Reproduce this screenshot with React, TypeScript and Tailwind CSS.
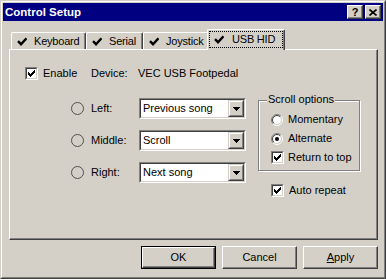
import React from "react";

// classic 7x7 check glyph
const CHECK_ROWS = [
  "......X",
  ".....XX",
  "X...XXX",
  "XX.XXX.",
  "XXXXX..",
  ".XXX...",
  "..X....",
];

function CheckGlyph() {
  return (
    <svg width="7" height="7" viewBox="0 0 7 7" shapeRendering="crispEdges">
      {CHECK_ROWS.map((row, y) =>
        row.split("").map((c, x) =>
          c === "X" ? <rect key={`${x}-${y}`} x={x} y={y} width="1" height="1" fill="#000" /> : null
        )
      )}
    </svg>
  );
}

function CheckBox({ checked }: { checked?: boolean }) {
  return (
    <span className="inline-block w-[13px] h-[13px] shrink-0 border border-t-[#808080] border-l-[#808080] border-r-white border-b-white">
      <span className="flex w-full h-full items-center justify-center bg-white border border-t-[#404040] border-l-[#404040] border-r-[#d4d0c8] border-b-[#d4d0c8]">
        {checked && <CheckGlyph />}
      </span>
    </span>
  );
}

function Radio3D({ checked }: { checked?: boolean }) {
  // 12x12 sunken radio
  const arc = (r: number) => {
    const d = r * Math.SQRT1_2;
    return {
      tl: `M${6 - d} ${6 + d} A${r} ${r} 0 0 1 ${6 + d} ${6 - d}`,
      br: `M${6 + d} ${6 - d} A${r} ${r} 0 0 1 ${6 - d} ${6 + d}`,
    };
  };
  const o = arc(5.5);
  const i = arc(4.5);
  return (
    <svg width="12" height="12" viewBox="0 0 12 12" className="shrink-0">
      <circle cx="6" cy="6" r="4.5" fill="#fff" />
      <path d={o.tl} stroke="#808080" fill="none" />
      <path d={o.br} stroke="#fff" fill="none" />
      <path d={i.tl} stroke="#404040" fill="none" />
      <path d={i.br} stroke="#d4d0c8" fill="none" />
      {checked && <circle cx="6" cy="6" r="2" fill="#000" />}
    </svg>
  );
}

function RingRadio() {
  return (
    <svg width="13" height="13" viewBox="0 0 13 13" className="shrink-0">
      <circle cx="6.5" cy="6.5" r="6" stroke="#505050" fill="none" />
    </svg>
  );
}

function DownArrow() {
  return (
    <svg width="7" height="4" viewBox="0 0 7 4" shapeRendering="crispEdges">
      <rect x="0" y="0" width="7" height="1" fill="#000" />
      <rect x="1" y="1" width="5" height="1" fill="#000" />
      <rect x="2" y="2" width="3" height="1" fill="#000" />
      <rect x="3" y="3" width="1" height="1" fill="#000" />
    </svg>
  );
}

function Combo({ value }: { value: string }) {
  return (
    <div className="w-[107px] h-[21px] shrink-0 border border-t-[#808080] border-l-[#808080] border-r-white border-b-white">
      <div className="flex h-full items-center bg-white border border-t-[#404040] border-l-[#404040] border-r-[#d4d0c8] border-b-[#d4d0c8]">
        <span className="flex-1 pl-[2px] whitespace-nowrap">{value}</span>
        <span className="w-[16px] h-[17px] border border-t-[#d4d0c8] border-l-[#d4d0c8] border-r-[#404040] border-b-[#404040]">
          <span className="flex h-full items-center justify-center bg-[#d4d0c8] border border-t-white border-l-white border-r-[#808080] border-b-[#808080]">
            <DownArrow />
          </span>
        </span>
      </div>
    </div>
  );
}

function CaptionBtn({ children, className = "" }: { children: React.ReactNode; className?: string }) {
  return (
    <span
      className={`w-[16px] h-[14px] border border-t-white border-l-white border-r-[#404040] border-b-[#404040] shadow-[inset_-1px_-1px_0_#808080] bg-[#d4d0c8] flex items-center justify-center text-black font-bold text-[11px] leading-none ${className}`}
    >
      {children}
    </span>
  );
}

function TabCheck() {
  return (
    <svg width="10" height="9" viewBox="0 0 10 9" className="shrink-0">
      <path d="M1 4.2 L4 7.2 L9.5 1.2" stroke="#000" strokeWidth="2.4" fill="none" />
    </svg>
  );
}

function Tab({ label, width, selected }: { label: string; width: string; selected?: boolean }) {
  if (selected) {
    return (
      <div className={`${width} h-[21px] -mx-[2px] -mb-px relative z-10 bg-[#d4d0c8] rounded-t-[2px] border-t border-l border-white border-r border-r-[#404040] shadow-[inset_-1px_0_0_#808080] px-[1px] pt-[1px] pb-[2px]`}>
        <div className="h-full flex items-center gap-[8px] pl-[4px] border border-dotted border-black">
          <TabCheck />
          <span className="whitespace-nowrap tracking-[-0.2px]">{label}</span>
        </div>
      </div>
    );
  }
  return (
    <div className={`${width} h-[17px] rounded-t-[2px] border-t border-l border-white border-r border-r-[#404040] shadow-[inset_-1px_0_0_#808080] flex items-center gap-[7px] pl-[5px] pt-[1px]`}>
      <TabCheck />
      <span className="whitespace-nowrap tracking-[-0.2px]">{label}</span>
    </div>
  );
}

function PushButton({ children, isDefault }: { children: React.ReactNode; isDefault?: boolean }) {
  if (isDefault) {
    return (
      <div className="w-[75px] h-[23px] border border-black">
        <div className="h-full flex items-center justify-center border border-t-white border-l-white border-r-[#404040] border-b-[#404040] shadow-[inset_-1px_-1px_0_#808080]">
          {children}
        </div>
      </div>
    );
  }
  return (
    <div className="w-[75px] h-[23px] flex items-center justify-center border border-t-white border-l-white border-r-[#404040] border-b-[#404040] shadow-[inset_-1px_-1px_0_#808080]">
      {children}
    </div>
  );
}

const BUTTONS = [
  { label: "Left:", value: "Previous song" },
  { label: "Middle:", value: "Scroll" },
  { label: "Right:", value: "Next song" },
];

export default function App() {
  return (
    <div className="w-[386px] h-[279px] bg-[#d4d0c8] border border-t-[#d4d0c8] border-l-[#d4d0c8] border-r-[#404040] border-b-[#404040] font-['Liberation_Sans',Arial,sans-serif] text-[11px] leading-[13px] text-black select-none">
      <div className="w-full h-full border border-t-white border-l-white border-r-[#808080] border-b-[#808080] p-px flex flex-col">
        {/* title bar */}
        <div className="h-[18px] shrink-0 bg-[#000080] flex items-center pl-[2px] pr-[2px]">
          <span className="flex-1 text-white font-bold text-[11.5px] whitespace-nowrap">Control Setup</span>
          <CaptionBtn>?</CaptionBtn>
          <CaptionBtn className="ml-[2px]">
            <svg width="8" height="7" viewBox="0 0 8 7">
              <path d="M0.5 0.5 L7.5 6.5 M7.5 0.5 L0.5 6.5" stroke="#000" strokeWidth="1.6" />
            </svg>
          </CaptionBtn>
        </div>

        {/* tabs */}
        <div className="mt-[8px] ml-[6px] pl-[2px] h-[20px] flex items-end">
          <Tab label="Keyboard" width="w-[75px]" />
          <Tab label="Serial" width="w-[57px]" />
          <Tab label="Joystick" width="w-[66px]" />
          <Tab label="USB HID" width="w-[78px]" selected />
        </div>

        {/* panel */}
        <div className="ml-[6px] w-[369px] h-[191px] shrink-0 border border-t-white border-l-white border-r-[#404040] border-b-[#404040] shadow-[inset_-1px_-1px_0_#808080] pt-[17px] pl-[15px]">
          <div className="h-[13px] flex items-center">
            <CheckBox checked />
            <span className="ml-[5px] w-[48px]">Enable</span>
            <span className="w-[47px]">Device:</span>
            <span className="whitespace-nowrap">VEC USB Footpedal</span>
          </div>

          <div className="mt-[18px] pl-[46px] flex items-start">
            <div className="flex flex-col gap-[11px]">
              {BUTTONS.map((b) => (
                <div key={b.label} className="h-[21px] flex items-center">
                  <RingRadio />
                  <span className="ml-[7px] w-[48px]">{b.label}</span>
                  <Combo value={b.value} />
                </div>
              ))}
            </div>

            <div className="ml-[12px] mt-[2px]">
              <div className="relative w-[102px] h-[71px] border border-[#808080] shadow-[1px_1px_0_#fff,inset_1px_1px_0_#fff] pt-[9px] pl-[12px]">
                <span className="absolute left-[8px] -top-[8px] px-[1px] bg-[#d4d0c8] whitespace-nowrap">
                  Scroll options
                </span>
                <div className="h-[19px] flex items-center">
                  <Radio3D />
                  <span className="ml-[5px]">Momentary</span>
                </div>
                <div className="h-[19px] flex items-center">
                  <Radio3D checked />
                  <span className="ml-[5px]">Alternate</span>
                </div>
                <div className="h-[19px] flex items-center">
                  <CheckBox checked />
                  <span className="ml-[4px] whitespace-nowrap">Return to top</span>
                </div>
              </div>
              <div className="mt-[13px] pl-[13px] h-[13px] flex items-center">
                <CheckBox checked />
                <span className="ml-[5px] whitespace-nowrap">Auto repeat</span>
              </div>
            </div>
          </div>
        </div>

        {/* buttons */}
        <div className="mt-[6px] pr-[5px] flex justify-end gap-[6px]">
          <PushButton isDefault>OK</PushButton>
          <PushButton>Cancel</PushButton>
          <PushButton>
            <span>
              <span className="underline">A</span>pply
            </span>
          </PushButton>
        </div>
      </div>
    </div>
  );
}
